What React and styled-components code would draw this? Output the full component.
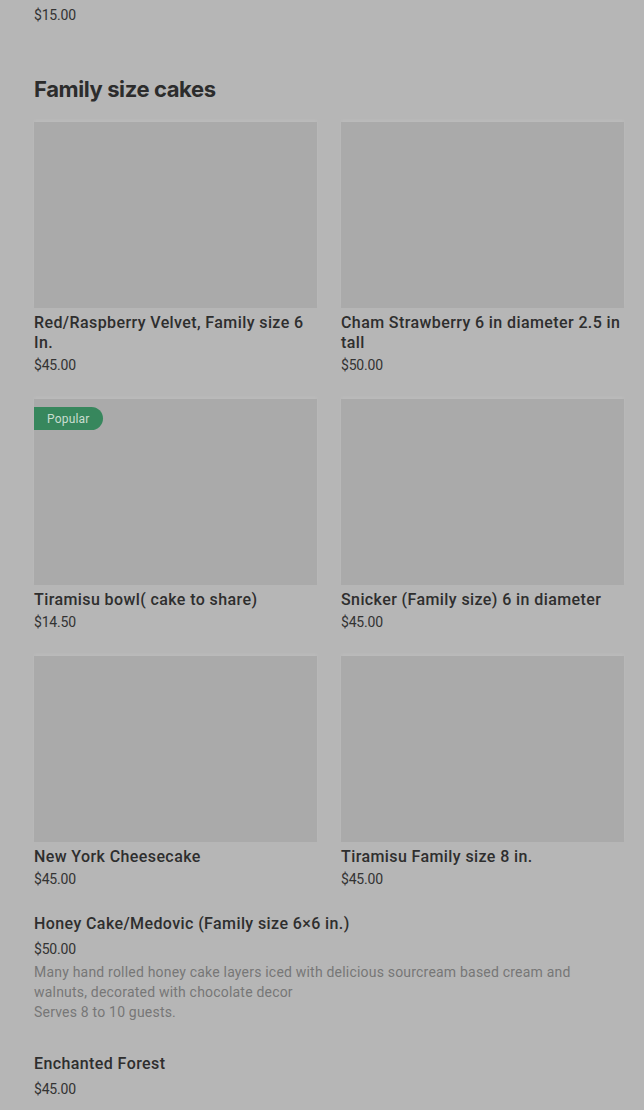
import styled, { createGlobalStyle } from "styled-components";

const GlobalStyle = createGlobalStyle`
  html, body {
    margin: 0;
    padding: 0;
    background: #b6b6b6;
  }
  body {
    font-family: Roboto, "Liberation Sans", Arial, sans-serif;
    color: #2f2f2f;
    overflow: hidden;
  }
`;

const gridItems = [
  { id: 1, title: "Red/Raspberry Velvet, Family size 6 In.", price: "$45.00" },
  { id: 2, title: "Cham Strawberry 6 in diameter 2.5 in tall", price: "$50.00" },
  { id: 3, title: "Tiramisu bowl( cake to share)", price: "$14.50", popular: true },
  { id: 4, title: "Snicker (Family size) 6 in diameter", price: "$45.00" },
  { id: 5, title: "New York Cheesecake", price: "$45.00" },
  { id: 6, title: "Tiramisu Family size 8 in.", price: "$45.00" },
];

const listItems = [
  {
    id: 7,
    title: "Honey Cake/Medovic (Family size 6×6 in.)",
    price: "$50.00",
    desc: [
      "Many hand rolled honey cake layers iced with delicious sourcream based cream and walnuts, decorated with chocolate decor",
      "Serves 8 to 10 guests.",
    ],
  },
  { id: 8, title: "Enchanted Forest", price: "$45.00" },
];

const App = () => {
  return (
    <Page>
      <GlobalStyle />
      <PrevItem>
        <ItemName>Chocolate Mousse Slice</ItemName>
        <Price>$15.00</Price>
      </PrevItem>

      <Section>
        <SectionTitle>Family size cakes</SectionTitle>
        <Grid>
          {gridItems.map((item) => (
            <Card key={item.id}>
              <Thumb>{item.popular && <Badge>Popular</Badge>}</Thumb>
              <ItemName>{item.title}</ItemName>
              <Price $gap={2}>{item.price}</Price>
            </Card>
          ))}
        </Grid>

        <List>
          {listItems.map((item) => (
            <Row key={item.id}>
              <ItemName>{item.title}</ItemName>
              <Price $gap={5}>{item.price}</Price>
              {item.desc && (
                <Desc>
                  {item.desc.map((line) => (
                    <div key={line}>{line}</div>
                  ))}
                </Desc>
              )}
            </Row>
          ))}
        </List>
      </Section>
    </Page>
  );
};

// --- STYLED COMPONENTS ---

const Page = styled.div`
  padding: 0 20px 0 34px;
  height: 1110px;
  overflow: hidden;
`;

const PrevItem = styled.div`
  margin-top: -18px;
`;

const Section = styled.section`
  margin-top: 50px;
`;

const SectionTitle = styled.h2`
  margin: 0 0 19px;
  font-family: Inter, "Liberation Sans", sans-serif;
  font-size: 22px;
  line-height: 28px;
  font-weight: 700;
  letter-spacing: -0.4px;
  color: #2c2c2c;
`;

const Grid = styled.div`
  display: grid;
  grid-template-columns: 283px 283px;
  column-gap: 24px;
  row-gap: 24px;
`;

const Card = styled.div`
  display: flex;
  flex-direction: column;
`;

const Thumb = styled.div`
  position: relative;
  height: 186px;
  margin-bottom: 5px;
  background: #aaaaaa;
  box-shadow: 0 -2px 3px rgba(255, 255, 255, 0.08);
`;

const Badge = styled.span`
  position: absolute;
  top: 8px;
  left: 0;
  height: 23px;
  padding: 0 13px;
  display: flex;
  align-items: center;
  background: #37875d;
  color: #c9ddd0;
  font-size: 12px;
  letter-spacing: 0.2px;
  border-radius: 0 12px 12px 0;
`;

const ItemName = styled.div`
  font-size: 16px;
  line-height: 20px;
  font-weight: 500;
  letter-spacing: 0.4px;
  color: #2e2e2e;
`;

const Price = styled.div`
  margin-top: ${(p) => p.$gap ?? 3}px;
  font-size: 14px;
  line-height: 20px;
  color: #333;
  letter-spacing: -0.2px;
`;

const List = styled.div`
  margin-top: 25px;
  display: flex;
  flex-direction: column;
  gap: 32px;
`;

const Row = styled.div`
  display: flex;
  flex-direction: column;
`;

const Desc = styled.div`
  margin-top: 3px;
  max-width: 560px;
  font-size: 14px;
  line-height: 20px;
  letter-spacing: 0.2px;
  color: #777;
`;

export default App;
